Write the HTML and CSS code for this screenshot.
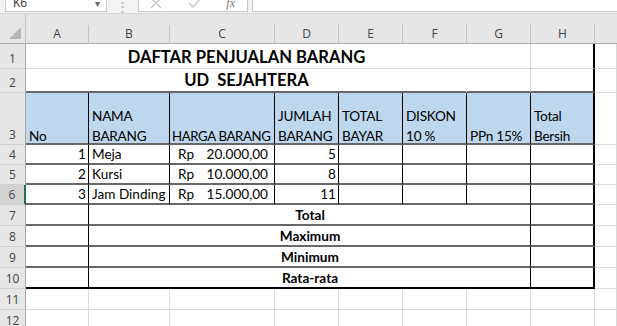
FILE: index.html
```html
<!DOCTYPE html>
<html>
<head>
<meta charset="utf-8">
<link rel="stylesheet" href="styles.css">
</head>
<body>
<div class="app">
  <div class="toolbar">
    <div class="namebox"><span class="nb-text">K6</span><span class="nb-arrow">&#9662;</span></div>
    <div class="dots">&#8942;</div>
    <div class="fbtns">
      <svg class="ic" width="14" height="14" viewBox="0 0 14 14"><path d="M2 2 L12 12 M12 2 L2 12" stroke="#c4c4c4" stroke-width="1.3" fill="none"/></svg>
      <svg class="ic" width="16" height="14" viewBox="0 0 16 14"><path d="M2 7 L6 11 L14 2" stroke="#c4c4c4" stroke-width="1.3" fill="none"/></svg>
      <span class="fx">fx</span>
    </div>
    <div class="finput"></div>
  </div>
  <div class="sheet">
    <div class="corner"><svg width="14" height="14" viewBox="0 0 14 14"><polygon points="13,1 13,13 1,13" fill="#b5b5b5"/></svg></div>
    <div class="band"></div>
    <div class="ch">A</div><div class="ch">B</div><div class="ch">C</div><div class="ch">D</div><div class="ch">E</div><div class="ch">F</div><div class="ch">G</div><div class="ch">H</div><div class="ch last"></div>

    <div class="rh">1</div>
    <div class="c title span6">DAFTAR PENJUALAN BARANG</div>
    <div class="c"></div><div class="c tr"></div><div class="c"></div>

    <div class="rh">2</div>
    <div class="c title span6 hb">UD&nbsp;&nbsp;SEJAHTERA</div>
    <div class="c hb"></div><div class="c tr hb"></div><div class="c"></div>

    <div class="rh rh3">3</div>
    <div class="c blue vb hb"><span>No</span></div>
    <div class="c blue vb hb"><span>NAMA<br>BARANG</span></div>
    <div class="c blue vb hb tight"><span>HARGA BARANG</span></div>
    <div class="c blue vb hb"><span>JUMLAH<br>BARANG</span></div>
    <div class="c blue vb hb"><span>TOTAL<br>BAYAR</span></div>
    <div class="c blue vb hb"><span>DISKON<br>10 %</span></div>
    <div class="c blue vb hb"><span>PPn 15%</span></div>
    <div class="c blue tr hb"><span>Total<br>Bersih</span></div>
    <div class="c"></div>

    <div class="rh">4</div>
    <div class="c num vb hb">1</div>
    <div class="c vb hb">Meja</div>
    <div class="c acc vb hb"><span>Rp</span><span>20.000,00</span></div>
    <div class="c num vb hb">5</div>
    <div class="c vb hb"></div><div class="c vb hb"></div><div class="c vb hb"></div><div class="c tr hb"></div>
    <div class="c"></div>

    <div class="rh">5</div>
    <div class="c num vb hb">2</div>
    <div class="c vb hb">Kursi</div>
    <div class="c acc vb hb"><span>Rp</span><span>10.000,00</span></div>
    <div class="c num vb hb">8</div>
    <div class="c vb hb"></div><div class="c vb hb"></div><div class="c vb hb"></div><div class="c tr hb"></div>
    <div class="c"></div>

    <div class="rh sel">6</div>
    <div class="c num vb hb">3</div>
    <div class="c vb hb">Jam Dinding</div>
    <div class="c acc vb hb"><span>Rp</span><span>15.000,00</span></div>
    <div class="c num vb hb">11</div>
    <div class="c vb hb"></div><div class="c vb hb"></div><div class="c vb hb"></div><div class="c tr hb"></div>
    <div class="c"></div>

    <div class="rh">7</div>
    <div class="c vb hb"></div>
    <div class="c bold center span6 vb hb">Total</div>
    <div class="c tr hb"></div>
    <div class="c"></div>

    <div class="rh">8</div>
    <div class="c vb hb"></div>
    <div class="c bold center span6 vb hb">Maximum</div>
    <div class="c tr hb"></div>
    <div class="c"></div>

    <div class="rh">9</div>
    <div class="c vb hb"></div>
    <div class="c bold center span6 vb hb">Minimum</div>
    <div class="c tr hb"></div>
    <div class="c"></div>

    <div class="rh">10</div>
    <div class="c vb tb"></div>
    <div class="c bold center span6 vb tb">Rata-rata</div>
    <div class="c tr tb"></div>
    <div class="c"></div>

    <div class="rh">11</div>
    <div class="c"></div><div class="c"></div><div class="c"></div><div class="c"></div><div class="c"></div><div class="c"></div><div class="c"></div><div class="c"></div><div class="c"></div>

    <div class="rh">12</div>
    <div class="c"></div><div class="c"></div><div class="c"></div><div class="c"></div><div class="c"></div><div class="c"></div><div class="c"></div><div class="c"></div><div class="c"></div>
  </div>
</div>
</body>
</html>
```
FILE: styles.css
```css
* { box-sizing: border-box; }
html, body { margin: 0; padding: 0; background: #fff; }
body { width: 617px; height: 326px; overflow: hidden; font-family: Lato, "Liberation Sans", sans-serif; }

.app { display: flex; flex-direction: column; }

.toolbar {
  height: 14px;
  display: flex;
  align-items: flex-end;
  background: #f3f3f3;
  border-bottom: 1px solid #d6d6d6;
  overflow: hidden;
  padding-bottom: 1px;
}
.namebox {
  flex: none;
  margin-left: 5px;
  width: 102px;
  height: 24px;
  background: #fff;
  border: 1px solid #c8c8c8;
  display: flex;
  align-items: flex-end;
  justify-content: space-between;
  padding: 0 6px 1px 7px;
  font-family: "Open Sans", sans-serif;
  font-size: 12px;
  color: #333;
  line-height: 14px;
}
.nb-arrow { font-size: 10px; color: #666; }
.dots {
  flex: none;
  width: 31px;
  text-align: center;
  color: #b0b0b0;
  font-size: 13px;
  line-height: 12px;
}
.fbtns {
  flex: none;
  width: 110px;
  height: 24px;
  background: #fff;
  border: 1px solid #c8c8c8;
  display: flex;
  align-items: flex-end;
  justify-content: space-between;
  padding: 0 12px 1px 10px;
}
.fx { font-family: "Liberation Serif", serif; font-style: italic; font-size: 12px; color: #777; line-height: 13px; }
.finput {
  flex: 1;
  margin-left: 4px;
  height: 24px;
  background: #fff;
  border: 1px solid #c8c8c8;
  border-right: none;
}

.sheet {
  display: grid;
  grid-template-columns: 26px 63px 81px 105px 64px 64px 64px 64px 64px 1fr;
  grid-template-rows: 11px 19px 25px 24px 52px 20px 20px 20px 21px 21px 21px 21px 21px 21px;
  background: #fff;
}
.corner {
  grid-row: 1 / span 2;
  grid-column: 1;
  background: #e6e6e6;
  border-right: 1px solid #c4c4c4;
  border-bottom: 1px solid #a8a8a8;
  display: flex;
  align-items: flex-end;
  justify-content: flex-end;
  padding: 0 3px 3px 0;
}
.band { grid-row: 1; grid-column: 2 / -1; background: #e6e6e6; }
.ch {
  background: #e6e6e6;
  border-right: 1px solid #c4c4c4;
  border-bottom: 1px solid #a8a8a8;
  font-family: "Open Sans", sans-serif;
  font-size: 12px;
  color: #444;
  display: flex;
  align-items: center;
  justify-content: center;
  line-height: 1;
  padding-bottom: 1px;
}
.ch.last { border-right: none; }

.rh {
  background: #e6e6e6;
  border-right: 1px solid #a8a8a8;
  border-bottom: 1px solid #cfcfcf;
  font-family: "Open Sans", sans-serif;
  font-size: 12px;
  color: #444;
  display: flex;
  align-items: flex-end;
  justify-content: center;
  line-height: 16px;
  padding-bottom: 1px;
}
.rh3 { padding-bottom: 1px; }
.rh.sel { background: #d3d3d3; border-right: 2px solid #217346; }

.c {
  border-right: 1px solid #dadada;
  border-bottom: 1px solid #dadada;
  display: flex;
  align-items: flex-end;
  padding: 0 2px 1px 3px;
  font-size: 13.6px;
  color: #000;
  white-space: nowrap;
  overflow: hidden;
  line-height: 16px;
}
.span6 { grid-column: span 6; }
.title { justify-content: center; font-weight: 700; font-size: 16.6px; line-height: 20px; border-right-color: transparent; }
.blue { background: #bdd7ee; line-height: 20px; padding-bottom: 0; letter-spacing: -0.25px; }
.blue span { margin-bottom: -3px; }
.blue.tight { font-size: 13.2px; letter-spacing: -0.35px; padding-left: 2px; }
.vb { border-right: 1px solid #000; }
.tr { border-right: 2px solid #000; }
.hb { border-bottom: 2px solid #676767; }
.tb { border-bottom: 2px solid #000; }
.num { justify-content: flex-end; }
.acc { justify-content: space-between; padding: 0 6px 1px 8px; }
.bold { font-weight: 700; }
.center { justify-content: center; }
```
